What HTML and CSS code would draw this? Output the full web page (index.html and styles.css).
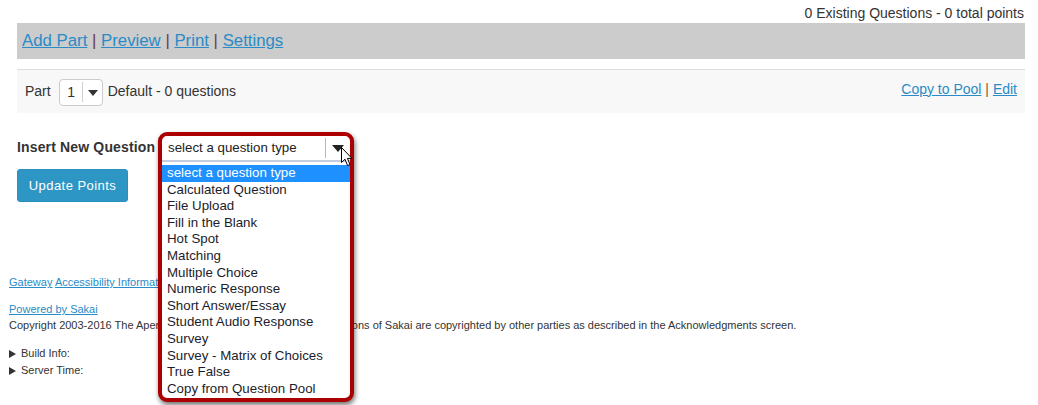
FILE: index.html
```html
<!DOCTYPE html>
<html lang="en">
<head>
<meta charset="utf-8">
<title>Assessment Questions</title>
<link rel="stylesheet" href="styles.css">
</head>
<body>
<div class="page">
  <div class="summary">0 Existing Questions - 0 total points</div>
  <div class="navbar">
    <a href="#">Add Part</a> <span class="sep">|</span> <a href="#">Preview</a> <span class="sep">|</span> <a href="#">Print</a> <span class="sep">|</span> <a href="#">Settings</a>
  </div>
  <div class="partbar">
    <div class="part-left">
      <span>Part</span>
      <span class="mini-select"><span class="mini-val">1</span><span class="mini-div"></span><span class="mini-caret"></span></span>
      <span>Default - 0 questions</span>
    </div>
    <div class="part-right"><a href="#">Copy to Pool</a> <span class="sep2">|</span> <a href="#">Edit</a></div>
  </div>
  <div class="insert-row">
    <span class="insert-label">Insert New Question</span>
    <div class="qselect">
      <div class="frame">
        <div class="field">
          <span class="field-text">select a question type</span>
          <span class="field-div"></span>
          <span class="field-caret"></span>
        </div>
        <ul class="options">
          <li class="selected">select a question type</li>
          <li>Calculated Question</li>
          <li>File Upload</li>
          <li>Fill in the Blank</li>
          <li>Hot Spot</li>
          <li>Matching</li>
          <li>Multiple Choice</li>
          <li>Numeric Response</li>
          <li>Short Answer/Essay</li>
          <li>Student Audio Response</li>
          <li>Survey</li>
          <li>Survey - Matrix of Choices</li>
          <li>True False</li>
          <li>Copy from Question Pool</li>
        </ul>
      </div>
      <svg class="cursor" width="12" height="20" viewBox="0 0 12 20"><path d="M0.5 0.5 L0.5 15.5 L4 12.2 L6.6 18.6 L9 17.6 L6.4 11.4 L11 11.4 Z" fill="#fff" stroke="#000" stroke-width="1" stroke-linejoin="round"/></svg>
    </div>
  </div>
  <button class="update">Update Points</button>
</div>
<footer class="footer">
  <div class="foot-links"><a href="#">Gateway</a> <a href="#">Accessibility Information</a></div>
  <div class="powered"><a href="#">Powered by Sakai</a></div>
  <div class="copyright">Copyright 2003-2016 The Apereo Foundation. All rights reserved. Portions of Sakai are copyrighted by other parties as described in the Acknowledgments screen.</div>
  <div class="info"><span class="tri"></span>Build Info:</div>
  <div class="info"><span class="tri"></span>Server Time:</div>
</footer>
</body>
</html>
```
FILE: styles.css
```css
html, body {
  margin: 0;
  padding: 0;
  background: #fff;
}
body {
  font-family: "Liberation Sans", Arial, sans-serif;
  color: #333;
  font-size: 14px;
  min-height: 405px;
}
a {
  color: #2a8bc6;
  text-decoration: underline;
}
.page {
  padding: 3px 13px 0 17px;
}
.summary {
  text-align: right;
  line-height: 20px;
  padding-right: 1px;
}
.navbar {
  background: #cccccc;
  height: 36px;
  line-height: 36px;
  padding-left: 5px;
  font-size: 16.8px;
  color: #7a3a3a;
}
.navbar .sep {
  color: #6b3b4b;
}
.partbar {
  margin-top: 10px;
  height: 43px;
  border-top: 1px solid #dddddd;
  background: #f8f8f8;
  display: flex;
  align-items: center;
  justify-content: space-between;
  padding: 0 8px;
}
.part-left {
  display: flex;
  align-items: center;
  gap: 6px;
  margin-top: -1px;
}
.mini-select {
  width: 42px;
  height: 25px;
  border: 1px solid #cccccc;
  border-radius: 4px;
  background: #fff;
  display: flex;
  align-items: center;
  margin-left: 2px;
  margin-right: -1px;
  margin-top: 2px;
}
.mini-val {
  width: 21px;
  text-align: center;
  padding-left: 1px;
}
.mini-div {
  width: 1px;
  height: 20px;
  background: #cfcfcf;
}
.mini-caret {
  width: 0;
  height: 0;
  border-left: 5px solid transparent;
  border-right: 5px solid transparent;
  border-top: 6px solid #333;
  margin-left: 5px;
  margin-top: 1px;
}
.part-right {
  font-size: 14px;
  color: #8a5a3a;
  margin-top: -6px;
}
.insert-row {
  display: flex;
  align-items: center;
  margin-top: 23px;
  height: 24px;
}
.insert-label {
  font-weight: bold;
  width: 145px;
  margin-top: -2px;
  letter-spacing: 0.15px;
}
.qselect {
  position: relative;
  width: 188px;
  height: 24px;
}
.frame {
  position: absolute;
  top: -4px;
  left: -4px;
  width: 188px;
  border: 4px solid #ac0000;
  border-radius: 9px;
  background: #fff;
  box-shadow: 1px 3px 5px rgba(0, 0, 0, 0.55);
  z-index: 5;
}
.field {
  height: 24px;
  display: flex;
  align-items: center;
  border-bottom: 2px solid #c3cde0;
}
.field-text {
  flex: 1;
  padding-left: 6px;
  font-size: 13.3px;
  color: #222;
  margin-top: -1px;
}
.field-div {
  width: 1px;
  height: 20px;
  background: #b8b8b8;
}
.field-caret {
  width: 0;
  height: 0;
  border-left: 6px solid transparent;
  border-right: 6px solid transparent;
  border-top: 7px solid #222;
  margin: 0 6px 0 6px;
}
.options {
  list-style: none;
  margin: 3px 0 0 0;
  padding: 0 0 1px 0;
}
.options li {
  height: 16.6px;
  line-height: 16.6px;
  font-size: 13.3px;
  padding-left: 5px;
  color: #1c1c2c;
  white-space: nowrap;
}
.options li.selected {
  background: #1e90ff;
  color: #fff;
}
.cursor {
  position: absolute;
  left: 179px;
  top: 11px;
  z-index: 6;
}
.update {
  display: block;
  margin-top: 9px;
  width: 111px;
  height: 33px;
  background: #2d96c5;
  color: #fff;
  border: 1px solid #2a8fbd;
  border-radius: 3px;
  font-family: "Liberation Sans", Arial, sans-serif;
  font-size: 13px;
  padding: 0;
  letter-spacing: 0.45px;
}
.footer {
  padding-left: 9px;
  margin-top: 72px;
  font-size: 11px;
  color: #333;
}
.foot-links,
.powered,
.copyright {
  line-height: 16px;
}
.powered {
  margin-top: 11px;
}
.info {
  line-height: 17px;
  display: flex;
  align-items: center;
}
.copyright + .info {
  margin-top: 12px;
}
.tri {
  width: 0;
  height: 0;
  border-top: 4px solid transparent;
  border-bottom: 4px solid transparent;
  border-left: 7px solid #333;
  margin-right: 5px;
}
```
